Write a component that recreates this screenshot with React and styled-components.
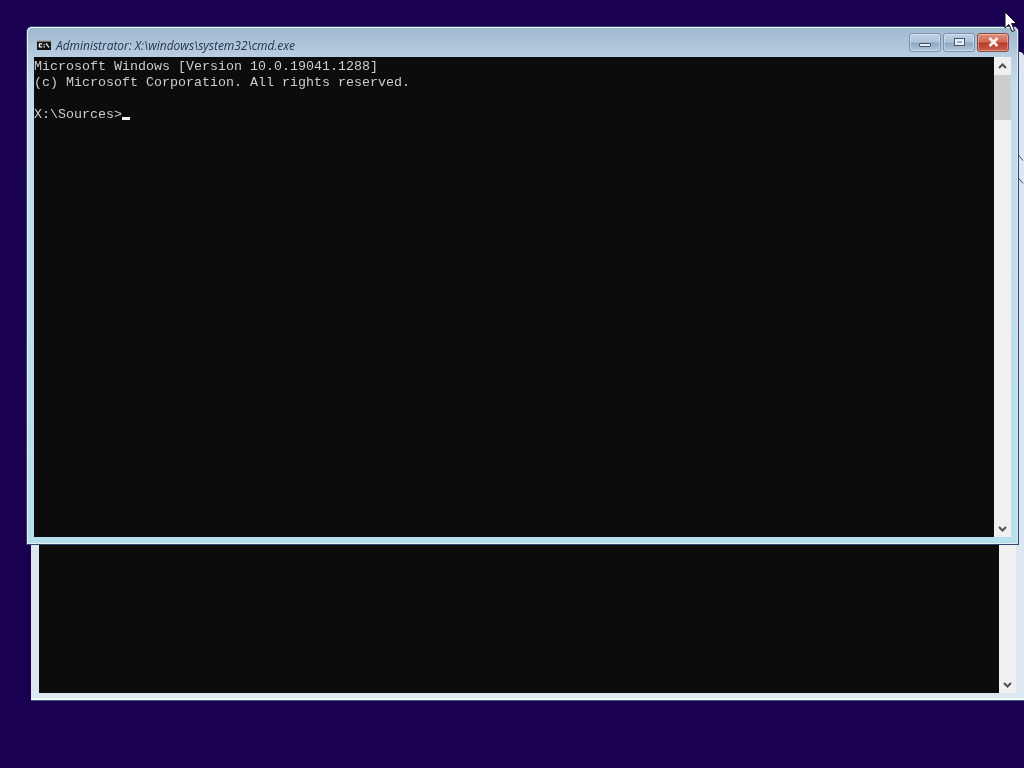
import React from "react";
import styled, { createGlobalStyle } from "styled-components";

const GlobalStyle = createGlobalStyle`
  html, body {
    margin: 0;
    padding: 0;
    width: 1024px;
    height: 768px;
    overflow: hidden;
    background: #1a0050;
  }
`;

const Desktop = styled.div`
  position: relative;
  width: 1024px;
  height: 768px;
  overflow: hidden;
  background: #1a0050;
`;

const Window = styled.div`
  position: absolute;
  left: ${(p) => p.$left}px;
  top: ${(p) => p.$top}px;
  width: ${(p) => p.$width}px;
  height: ${(p) => p.$height}px;
  box-sizing: border-box;
  display: flex;
  flex-direction: column;
  padding: 0 7px 7px 7px;
  border-radius: 5px 5px 0 0;
  background: linear-gradient(180deg, #9db8d0 0, #b9cee1 30px, #c4dcea 60px, #b6dfec 100%);
  box-shadow: inset 0 1px 0 #eef4f8, inset 1px 0 0 #dfeaf2, inset -1px 0 0 #dfeaf2, inset 0 -1px 0 #dfeff5, 0 0 0 1px #33466c;
`;

const BackWindow = styled(Window)`
  padding: 0 8px 7px 8px;
  background: #dde7f2;
  box-shadow: inset 0 -2px 0 #f2f6fa, inset 0 1px 0 #f0f5f9, 0 1px 0 #44587f;
`;

const TitleBar = styled.div`
  flex: none;
  height: 30px;
  display: flex;
  align-items: center;
  padding-top: 6px;
  box-sizing: border-box;
`;

const AppIcon = styled.svg`
  flex: none;
  width: 14px;
  height: 10px;
  margin: 0 5px 0 3px;
`;

const TitleText = styled.span`
  font-family: "Open Sans", "Liberation Sans", sans-serif;
  font-style: italic;
  font-size: 12px;
  letter-spacing: -0.03px;
  color: #27344c;
  white-space: nowrap;
  will-change: transform;
`;

const Controls = styled.div`
  margin-left: auto;
  margin-top: -6px;
  margin-right: 2px;
  display: flex;
  gap: 2px;
`;

const Control = styled.div`
  width: 32px;
  height: 19px;
  box-sizing: border-box;
  border: 1px solid ${(p) => (p.$close ? "#8c4a44" : "#7b93ae")};
  border-radius: 3px;
  display: flex;
  align-items: center;
  justify-content: center;
  background: ${(p) =>
    p.$close
      ? "linear-gradient(180deg, #dc8f7c 0%, #d06a56 45%, #b93a28 55%, #c9604a 100%)"
      : "linear-gradient(180deg, #bfd0e2 0%, #afc4d9 45%, #8fa8c1 55%, #b2c8dc 100%)"};
  box-shadow: inset 0 0 0 1px rgba(255, 255, 255, 0.35);
`;

const MinGlyph = styled.div`
  width: 10px;
  height: 2px;
  margin-top: 6px;
  background: #e8eff6;
  border: 1px solid #44566e;
  border-radius: 1px;
`;

const MaxGlyph = styled.div`
  width: 5px;
  height: 2px;
  background: #9db3c9;
  border: 2px solid #e8eff6;
  outline: 1px solid #44566e;
`;

const Client = styled.div`
  flex: 1;
  min-height: 0;
  display: flex;
  overflow: hidden;
`;

const Console = styled.pre`
  flex: 1;
  margin: 0;
  padding-top: 2px;
  background: #0c0c0c;
  color: #cccccc;
  font-family: "Liberation Mono", monospace;
  font-size: 13.33px;
  line-height: 16px;
  overflow: hidden;
`;

const ConsoleText = styled.div`
  will-change: transform;
`;

const Caret = styled.span`
  display: inline-block;
  width: 8px;
  height: 3px;
  background: #f2f2f2;
  vertical-align: -2px;
`;

const Scrollbar = styled.div`
  flex: none;
  width: 17px;
  display: flex;
  flex-direction: column;
  background: #f0f0f0;
`;

const ArrowButton = styled.div`
  flex: none;
  height: 17px;
  display: flex;
  align-items: center;
  justify-content: center;
  color: #505050;
`;

const Track = styled.div`
  flex: 1;
  display: flex;
  flex-direction: column;
`;

const Thumb = styled.div`
  flex: none;
  height: 45px;
  margin-top: 1px;
  background: #cdcdcd;
`;

const Pointer = styled.svg`
  position: absolute;
  left: 1004px;
  top: 11px;
  width: 13px;
  height: 23px;
`;

// the small dark ticks on the strip of the back window, right of the front one
const EdgeTicks = styled.svg`
  position: absolute;
  left: 1018px;
  top: 150px;
  width: 6px;
  height: 40px;
`;

const Chevron = ({ up }) => (
  <svg width="9" height="6" viewBox="0 0 9 6">
    <path
      d={up ? "M1 5 L4.5 1.5 L8 5" : "M1 1 L4.5 4.5 L8 1"}
      fill="none"
      stroke="currentColor"
      strokeWidth="2"
    />
  </svg>
);

const Bar = ({ thumb }) => (
  <Scrollbar>
    <ArrowButton>
      <Chevron up />
    </ArrowButton>
    <Track>{thumb && <Thumb />}</Track>
    <ArrowButton>
      <Chevron />
    </ArrowButton>
  </Scrollbar>
);

export default function App() {
  return (
    <Desktop>
      <GlobalStyle />
      <BackWindow $left={31} $top={52} $width={993} $height={648}>
        <TitleBar />
        <Client>
          <Console />
          <Bar />
        </Client>
      </BackWindow>

      <EdgeTicks viewBox="0 0 6 40">
        <path d="M0.5 5 L5 10.5 M0.5 28 L5 33.5" stroke="#4a4f66" strokeWidth="1" fill="none" />
      </EdgeTicks>

      <Window $left={27} $top={27} $width={991} $height={517}>
        <TitleBar>
          <AppIcon viewBox="0 0 16 12" preserveAspectRatio="none">
            <rect width="16" height="12" fill="#141414" />
            <rect x="0" y="0" width="16" height="2" fill="#a8a8a8" />
            <path d="M2 4h4v1.5H3.5v2H6V9H2z M7.5 5h1.5v1.4H7.5z M7.5 7.6h1.5V9H7.5z" fill="#f4f4f4" />
            <path d="M10.3 4 L13.8 9" stroke="#f4f4f4" strokeWidth="1.5" fill="none" />
          </AppIcon>
          <TitleText>Administrator: X:\windows\system32\cmd.exe</TitleText>
          <Controls>
            <Control>
              <MinGlyph />
            </Control>
            <Control>
              <MaxGlyph />
            </Control>
            <Control $close>
              <svg width="13" height="10" viewBox="0 0 13 10">
                <path d="M2.5 1 L10.5 9 M10.5 1 L2.5 9" stroke="#f6f0ee" strokeWidth="2.6" />
              </svg>
            </Control>
          </Controls>
        </TitleBar>
        <Client>
          <Console>
            <ConsoleText>
              {"Microsoft Windows [Version 10.0.19041.1288]\n(c) Microsoft Corporation. All rights reserved.\n\nX:\\Sources>"}
              <Caret />
            </ConsoleText>
          </Console>
          <Bar thumb />
        </Client>
      </Window>

      <Pointer viewBox="0 0 13 23">
        <path d="M1 1 L1 17 L5 13.5 L8 20.5 L10.5 19.5 L7.6 12.6 L12.5 12.5 Z" fill="#fff" stroke="#111" strokeWidth="1" />
      </Pointer>
    </Desktop>
  );
}
